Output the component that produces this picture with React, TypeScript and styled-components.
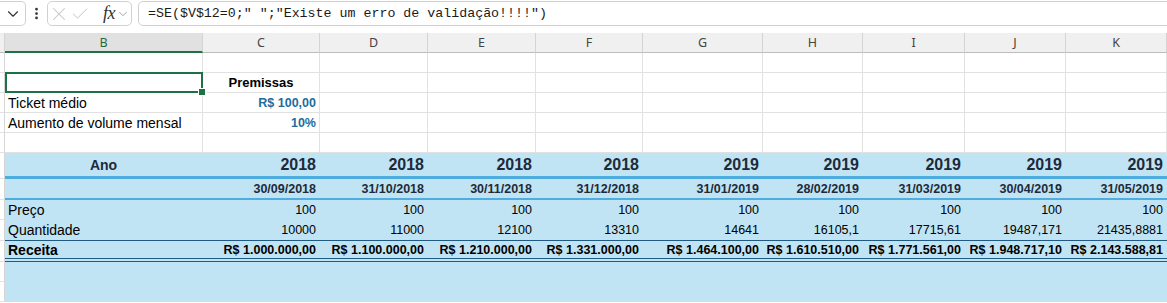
import React from 'react';
import styled, { createGlobalStyle, css } from 'styled-components';
import { ChevronDown, EllipsisVertical, X, Check } from 'lucide-react';

const COLS = '5px 198px 117px 108px 108px 107px 120px 100px 102px 101px 101px';
const GRID = '#e1e1e1';
const BLUE = '#c0e4f4';
const NAVY = '#1e2a3a';

const GlobalStyle = createGlobalStyle`
  html, body { margin: 0; padding: 0; background: #fff; overflow: hidden; }
  body { font-family: "Liberation Sans", Arial, sans-serif; color: #000; }
  * { box-sizing: border-box; }
`;

const Page = styled.div`
  width: 1167px;
  height: 303px;
  overflow: hidden;
  display: flex;
  flex-direction: column;
`;

/* ---------- formula bar ---------- */
const FormulaBar = styled.div`
  height: 27px;
  padding-top: 1px;
  display: flex;
  align-items: flex-start;
`;

const NameBox = styled.div`
  width: 26px;
  height: 25px;
  border: 1px solid #d1d1d1;
  border-left: none;
  border-radius: 0 5px 5px 0;
  display: flex;
  align-items: center;
  justify-content: flex-end;
  padding-right: 3px;
  color: #333;
`;

const Dots = styled.div`
  width: 21px;
  height: 25px;
  display: flex;
  align-items: center;
  justify-content: center;
  color: #333;
`;

const ActionBox = styled.div`
  width: 85px;
  height: 25px;
  border: 1px solid #d1d1d1;
  border-radius: 5px;
  display: flex;
  align-items: center;
  padding-left: 0;
  color: #c4c4c4;
`;

const ActionIcon = styled.span<{ $gap: number; $color?: string }>`
  display: flex;
  margin-right: ${(p) => p.$gap}px;
  color: ${(p) => p.$color || 'inherit'};
`;

const Fx = styled.span`
  font-family: "Liberation Serif", serif;
  font-style: italic;
  font-size: 18px;
  color: #333;
  margin-right: 1px;
  line-height: 1;
  letter-spacing: -0.5px;
  padding-bottom: 2px;
`;

const FormulaInput = styled.div`
  flex: 1;
  height: 25px;
  margin-left: 6px;
  margin-right: -6px;
  border: 1px solid #d1d1d1;
  border-radius: 5px;
  display: flex;
  align-items: center;
  padding-left: 9px;
  font-family: "Liberation Mono", "DejaVu Sans Mono", monospace;
  font-size: 13.3px;
  color: #1a1a1a;
  white-space: pre;
`;

const Spacer = styled.div`
  height: 6px;
`;

/* ---------- column headers ---------- */
const HeaderRow = styled.div`
  display: grid;
  grid-template-columns: ${COLS};
  height: 20px;
`;

const ColHead = styled.div<{ $selected?: boolean }>`
  background: ${(p) => (p.$selected ? '#e1e1e1' : '#f0f0f0')};
  border-right: 1px solid #d4d4d4;
  border-bottom: ${(p) => (p.$selected ? '2px solid #1e7145' : '1px solid #bdbdbd')};
  display: flex;
  align-items: center;
  justify-content: center;
  font-family: "Noto Sans", "Open Sans", sans-serif;
  font-size: 12.5px;
  color: ${(p) => (p.$selected ? '#1e6b40' : '#444')};
  padding-top: ${(p) => (p.$selected ? '1px' : '0')};
`;

/* ---------- white sheet rows ---------- */
const SheetRow = styled.div`
  display: grid;
  grid-template-columns: ${COLS};
  height: 20px;
`;

const Gutter = styled.div`
  background: #fff;
  border-right: 1px solid #d6d6d6;
  border-bottom: 1px solid ${GRID};
`;

const Cell = styled.div<{ $align?: 'left' | 'right' | 'center'; $selected?: boolean }>`
  position: relative;
  border-right: 1px solid ${GRID};
  border-bottom: 1px solid ${GRID};
  display: flex;
  align-items: center;
  justify-content: ${(p) =>
    p.$align === 'right' ? 'flex-end' : p.$align === 'center' ? 'center' : 'flex-start'};
  padding: 0 3px;
  white-space: nowrap;
  font-size: 14px;
  ${(p) =>
    p.$selected &&
    css`
      &::after {
        content: '';
        position: absolute;
        left: 0;
        top: -1px;
        right: -1px;
        bottom: -1px;
        border: 2px solid #1e7145;
        z-index: 2;
      }
      &::before {
        content: '';
        position: absolute;
        right: -4px;
        bottom: -4px;
        width: 6px;
        height: 6px;
        background: #1e7145;
        border: 1px solid #fff;
        z-index: 3;
      }
    `}
`;

const TitleText = styled.span`
  font-weight: 700;
  font-size: 13px;
`;

const InputValue = styled.span`
  font-weight: 700;
  font-size: 12.5px;
  color: #1d6c9e;
`;

/* ---------- blue table ---------- */
type Rule = 'none' | 'thick' | 'mid' | 'thin' | 'double';

const ruleCss: Record<Rule, string> = {
  none: 'none',
  thick: '3px solid #4eacdf',
  mid: '2px solid #4eacdf',
  thin: '1px solid #1f5a85',
  double: '4px double #1f5a85',
};

const BlueRow = styled.div<{ $h: number }>`
  display: grid;
  grid-template-columns: ${COLS};
  height: ${(p) => p.$h}px;
`;

const BlueCell = styled.div<{ $rule: Rule; $align?: 'left' | 'right' | 'center' }>`
  background: ${BLUE};
  border-bottom: ${(p) => ruleCss[p.$rule]};
  display: flex;
  align-items: center;
  justify-content: ${(p) =>
    p.$align === 'right' ? 'flex-end' : p.$align === 'center' ? 'center' : 'flex-start'};
  padding: 0 4px 0 3px;
  white-space: nowrap;
`;

const Label = styled.span<{ $bold?: boolean }>`
  font-size: 14px;
  font-weight: ${(p) => (p.$bold ? 700 : 400)};
`;

const HeadLabel = styled.span`
  font-size: 14px;
  font-weight: 700;
  color: ${NAVY};
`;

const Year = styled.span`
  font-size: 16px;
  font-weight: 700;
  color: ${NAVY};
`;

const DateText = styled.span`
  font-size: 12.5px;
  font-weight: 700;
  color: ${NAVY};
`;

const Num = styled.span<{ $bold?: boolean }>`
  font-size: 12.5px;
  font-weight: ${(p) => (p.$bold ? 700 : 400)};
  color: #000;
`;

const years = ['2018', '2018', '2018', '2018', '2019', '2019', '2019', '2019', '2019'];
const dates = [
  '30/09/2018', '31/10/2018', '30/11/2018', '31/12/2018', '31/01/2019',
  '28/02/2019', '31/03/2019', '30/04/2019', '31/05/2019',
];
const qtd = ['10000', '11000', '12100', '13310', '14641', '16105,1', '17715,61', '19487,171', '21435,8881'];
const receita = [
  'R$ 1.000.000,00', 'R$ 1.100.000,00', 'R$ 1.210.000,00', 'R$ 1.331.000,00', 'R$ 1.464.100,00',
  'R$ 1.610.510,00', 'R$ 1.771.561,00', 'R$ 1.948.717,10', 'R$ 2.143.588,81',
];
const letters = ['C', 'D', 'E', 'F', 'G', 'H', 'I', 'J', 'K'];
const empty9 = Array.from({ length: 9 });
const empty8 = Array.from({ length: 8 });

export default function App() {
  return (
    <>
      <GlobalStyle />
      <Page>
        <FormulaBar>
          <NameBox>
            <ChevronDown size={18} strokeWidth={1.5} />
          </NameBox>
          <Dots>
            <EllipsisVertical size={15} strokeWidth={2.4} />
          </Dots>
          <ActionBox>
            <ActionIcon $gap={0}>
              <X size={22} strokeWidth={1.1} />
            </ActionIcon>
            <ActionIcon $gap={13}>
              <Check size={20} strokeWidth={1.2} />
            </ActionIcon>
            <Fx>fx</Fx>
            <ActionIcon $gap={0} $color="#8a8a8a">
              <ChevronDown size={14} strokeWidth={1.3} />
            </ActionIcon>
          </ActionBox>
          <FormulaInput>{'=SE($V$12=0;" ";"Existe um erro de validação!!!!")'}</FormulaInput>
        </FormulaBar>
        <Spacer />
        <HeaderRow>
          <ColHead />
          <ColHead $selected>B</ColHead>
          {letters.map((l) => (
            <ColHead key={l}>{l}</ColHead>
          ))}
        </HeaderRow>

        <SheetRow>
          <Gutter />
          <Cell />
          {empty9.map((_, i) => (
            <Cell key={i} />
          ))}
        </SheetRow>
        <SheetRow>
          <Gutter />
          <Cell $selected />
          <Cell $align="center">
            <TitleText>Premissas</TitleText>
          </Cell>
          {empty8.map((_, i) => (
            <Cell key={i} />
          ))}
        </SheetRow>
        <SheetRow>
          <Gutter />
          <Cell>Ticket médio</Cell>
          <Cell $align="right">
            <InputValue>R$ 100,00</InputValue>
          </Cell>
          {empty8.map((_, i) => (
            <Cell key={i} />
          ))}
        </SheetRow>
        <SheetRow>
          <Gutter />
          <Cell>Aumento de volume mensal</Cell>
          <Cell $align="right">
            <InputValue>10%</InputValue>
          </Cell>
          {empty8.map((_, i) => (
            <Cell key={i} />
          ))}
        </SheetRow>
        <SheetRow>
          <Gutter />
          <Cell />
          {empty9.map((_, i) => (
            <Cell key={i} />
          ))}
        </SheetRow>

        <BlueRow $h={26}>
          <Gutter />
          <BlueCell $rule="thick" $align="center">
            <HeadLabel>Ano</HeadLabel>
          </BlueCell>
          {years.map((y, i) => (
            <BlueCell key={i} $rule="thick" $align="right">
              <Year>{y}</Year>
            </BlueCell>
          ))}
        </BlueRow>
        <BlueRow $h={21}>
          <Gutter />
          <BlueCell $rule="mid" />
          {dates.map((d, i) => (
            <BlueCell key={i} $rule="mid" $align="right">
              <DateText>{d}</DateText>
            </BlueCell>
          ))}
        </BlueRow>
        <BlueRow $h={20}>
          <Gutter />
          <BlueCell $rule="none">
            <Label>Preço</Label>
          </BlueCell>
          {empty9.map((_, i) => (
            <BlueCell key={i} $rule="none" $align="right">
              <Num>100</Num>
            </BlueCell>
          ))}
        </BlueRow>
        <BlueRow $h={21}>
          <Gutter />
          <BlueCell $rule="thin">
            <Label>Quantidade</Label>
          </BlueCell>
          {qtd.map((q, i) => (
            <BlueCell key={i} $rule="thin" $align="right">
              <Num>{q}</Num>
            </BlueCell>
          ))}
        </BlueRow>
        <BlueRow $h={21}>
          <Gutter />
          <BlueCell $rule="double">
            <Label $bold>Receita</Label>
          </BlueCell>
          {receita.map((r, i) => (
            <BlueCell key={i} $rule="double" $align="right">
              <Num $bold>{r}</Num>
            </BlueCell>
          ))}
        </BlueRow>
        {[20, 20].map((h, k) => (
          <BlueRow key={k} $h={h}>
            <Gutter />
            <BlueCell $rule="none" />
            {empty9.map((_, i) => (
              <BlueCell key={i} $rule="none" />
            ))}
          </BlueRow>
        ))}
      </Page>
    </>
  );
}
